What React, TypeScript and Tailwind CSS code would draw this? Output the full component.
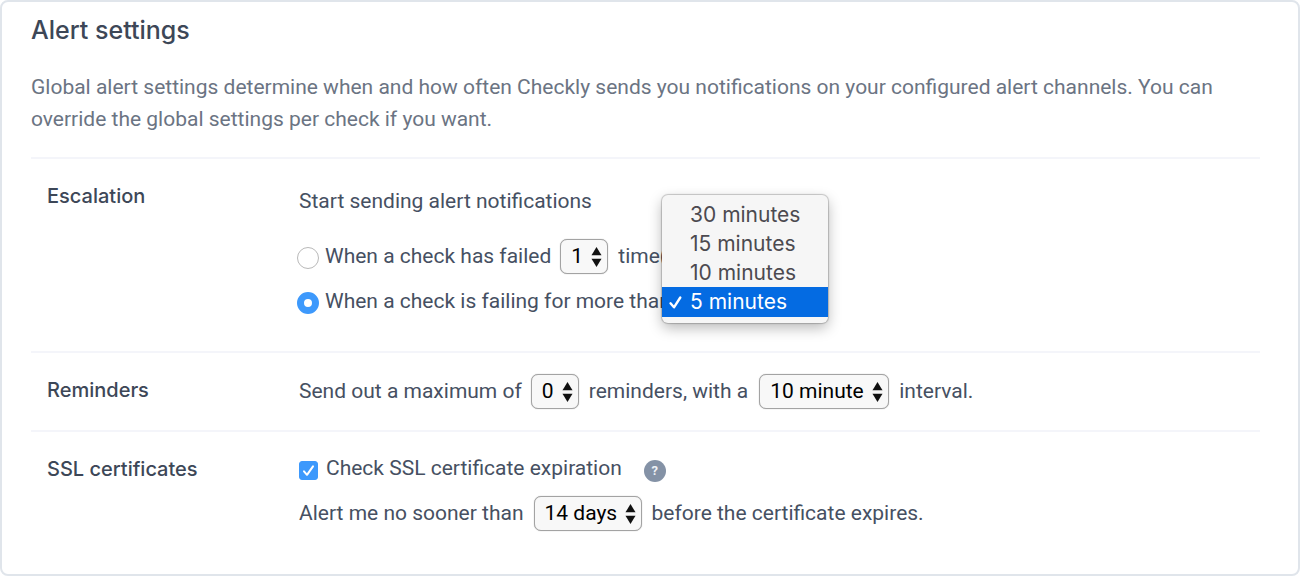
import { useState, type ReactNode } from 'react';

type PickerProps = {
  label: string;
  options: string[];
  className: string;
};

function Picker({ label, options, className }: PickerProps) {
  return (
    <span className={`relative inline-flex h-[35px] shrink-0 ${className}`}>
      <select
        aria-label={label}
        className="w-full cursor-pointer appearance-none rounded-[7px] border border-[#a3a3a3] bg-[#f8f8f8] pl-[10px] text-black shadow-[0_0_1px_rgba(0,0,0,0.35)]"
      >
        {options.map((option) => (
          <option key={option}>{option}</option>
        ))}
      </select>
      <svg
        className="pointer-events-none absolute top-2 right-[6px] h-5 w-[11px]"
        viewBox="0 0 11 20"
        fill="#111"
        aria-hidden="true"
      >
        <path d="M5.5 0 10.5 8.3H.5Z" />
        <path d="M5.5 20 .5 11.7h10Z" />
      </svg>
    </span>
  );
}

function Section({ title, className, children }: { title: string; className: string; children: ReactNode }) {
  return (
    <section className={`grid grid-cols-[252px_1fr] border-t-2 border-[#f4f5fa] pl-4 ${className}`}>
      <h2 className="font-['Inter','Liberation_Sans',sans-serif] text-[20px] font-medium leading-8 text-[#3d4757]">
        {title}
      </h2>
      <div className="whitespace-nowrap">{children}</div>
    </section>
  );
}

const durations = ['30 minutes', '15 minutes', '10 minutes', '5 minutes'];

function DurationMenu() {
  const [selected, setSelected] = useState('5 minutes');
  return (
    <span className="relative inline-flex h-[35px] w-[150px]">
      <Picker label="Failing duration" options={[selected]} className="w-full" />
      <span
        role="listbox"
        aria-label="Failing duration options"
        className="absolute -top-[89px] -left-[9px] z-10 flex w-[166px] flex-col rounded-[6px] bg-[#f6f6f6] pt-[5px] pb-[6px] font-['Inter','Liberation_Sans',sans-serif] shadow-[0_0_1px_1px_rgba(0,0,0,0.2),0_5px_14px_rgba(0,0,0,0.28)]"
      >
        {durations.map((duration) => (
          <button
            key={duration}
            type="button"
            role="option"
            aria-selected={duration === selected}
            onClick={() => setSelected(duration)}
            className={`flex items-center pl-[6px] text-left ${
              duration === selected ? 'h-[30px] bg-[#046be2] text-white' : 'h-[29px] text-[#4c4a50]'
            }`}
          >
            <span className="flex w-[22px]">
              {duration === selected && (
                <svg className="h-[15px] w-[15px]" viewBox="0 0 15 15" fill="none" aria-hidden="true">
                  <path d="M2.5 8.3 6 12.3 12.3 2.5" stroke="currentColor" strokeWidth="2.4" strokeLinecap="round" strokeLinejoin="round" />
                </svg>
              )}
            </span>
            {duration}
          </button>
        ))}
      </span>
    </span>
  );
}

const radioClass =
  'mt-[3px] h-[22px] w-[22px] shrink-0 appearance-none rounded-full border border-[#b9b9b9] bg-white checked:border-[7px] checked:border-[#3d99fc]';

export default function App() {
  return (
    <main className="min-h-screen rounded-lg border-2 border-[#e0e5eb] bg-white pt-2 pr-[38px] pb-10 pl-[29px] font-['Roboto','Liberation_Sans',sans-serif] text-[21px] text-[#465062]">
      <h1 className="font-['Inter','Liberation_Sans',sans-serif] text-[25px] font-medium leading-10 text-[#3d4757]">
        Alert settings
      </h1>
      <p className="mt-[21px] mb-[22px] leading-8 text-[#6b7483]">
        Global alert settings determine when and how often Checkly sends you notifications on your configured alert
        channels. You can override the global settings per check if you want.
      </p>

      <Section title="Escalation" className="pt-[21px] pb-8">
        <p className="mt-[5px] leading-8">Start sending alert notifications</p>
        <div className="mt-[22px] -ml-[2px] flex h-[35px] items-center">
          <input id="failed" type="radio" name="escalation" className={radioClass} />
          <label htmlFor="failed" className="mr-[9px] ml-[6px]">
            When a check has failed
          </label>
          <Picker label="Number of failures" options={['1', '2', '3', '4', '5']} className="w-12" />
          <span className="ml-[10px]">time(s)</span>
        </div>
        <div className="mt-[10px] -ml-[2px] flex h-[35px] items-center">
          <input id="failing" type="radio" name="escalation" defaultChecked className={radioClass} />
          <label htmlFor="failing" className="mr-2 ml-[6px] w-[338px]">
            When a check is failing for more than
          </label>
          <DurationMenu />
        </div>
      </Section>

      <Section title="Reminders" className="pt-[21px] pb-[21px]">
        <div className="flex h-[35px] items-center">
          <span className="mr-[9px]">Send out a maximum of</span>
          <Picker label="Maximum reminders" options={['0', '1', '2', '3']} className="w-12" />
          <span className="mr-[11px] ml-[10px]">reminders, with a</span>
          <Picker label="Reminder interval" options={['10 minute', '5 minute', '15 minute']} className="w-[130px]" />
          <span className="ml-[10px]">interval.</span>
        </div>
      </Section>

      <Section title="SSL certificates" className="pt-[21px]">
        <div className="flex h-8 items-center">
          <span className="relative mt-[3px] flex h-[19px] w-[19px] shrink-0">
            <input
              id="expiration"
              type="checkbox"
              defaultChecked
              className="peer h-full w-full appearance-none rounded-[3px] border border-[#b9b9b9] checked:border-[#3d99fc] checked:bg-[#3d99fc]"
            />
            <svg
              className="pointer-events-none absolute inset-0 hidden peer-checked:block"
              viewBox="0 0 19 19"
              fill="none"
              aria-hidden="true"
            >
              <path d="M5 10.3 8 13.8 14 5.3" stroke="white" strokeWidth="2" strokeLinecap="round" strokeLinejoin="round" />
            </svg>
          </span>
          <label htmlFor="expiration" className="mr-[22px] ml-2">
            Check SSL certificate expiration
          </label>
          <button
            type="button"
            aria-label="About certificate expiration"
            className="mt-[3px] flex h-[22px] w-[22px] items-center justify-center rounded-full bg-[#8492a6] text-[13px] font-bold leading-none text-[#eef1f5]"
          >
            ?
          </button>
        </div>
        <div className="mt-[11px] flex h-[35px] items-center">
          <span className="mr-[10px]">Alert me no sooner than</span>
          <Picker label="Days before expiry" options={['14 days', '7 days', '30 days']} className="w-[108px]" />
          <span className="ml-[10px]">before the certificate expires.</span>
        </div>
      </Section>
    </main>
  );
}
